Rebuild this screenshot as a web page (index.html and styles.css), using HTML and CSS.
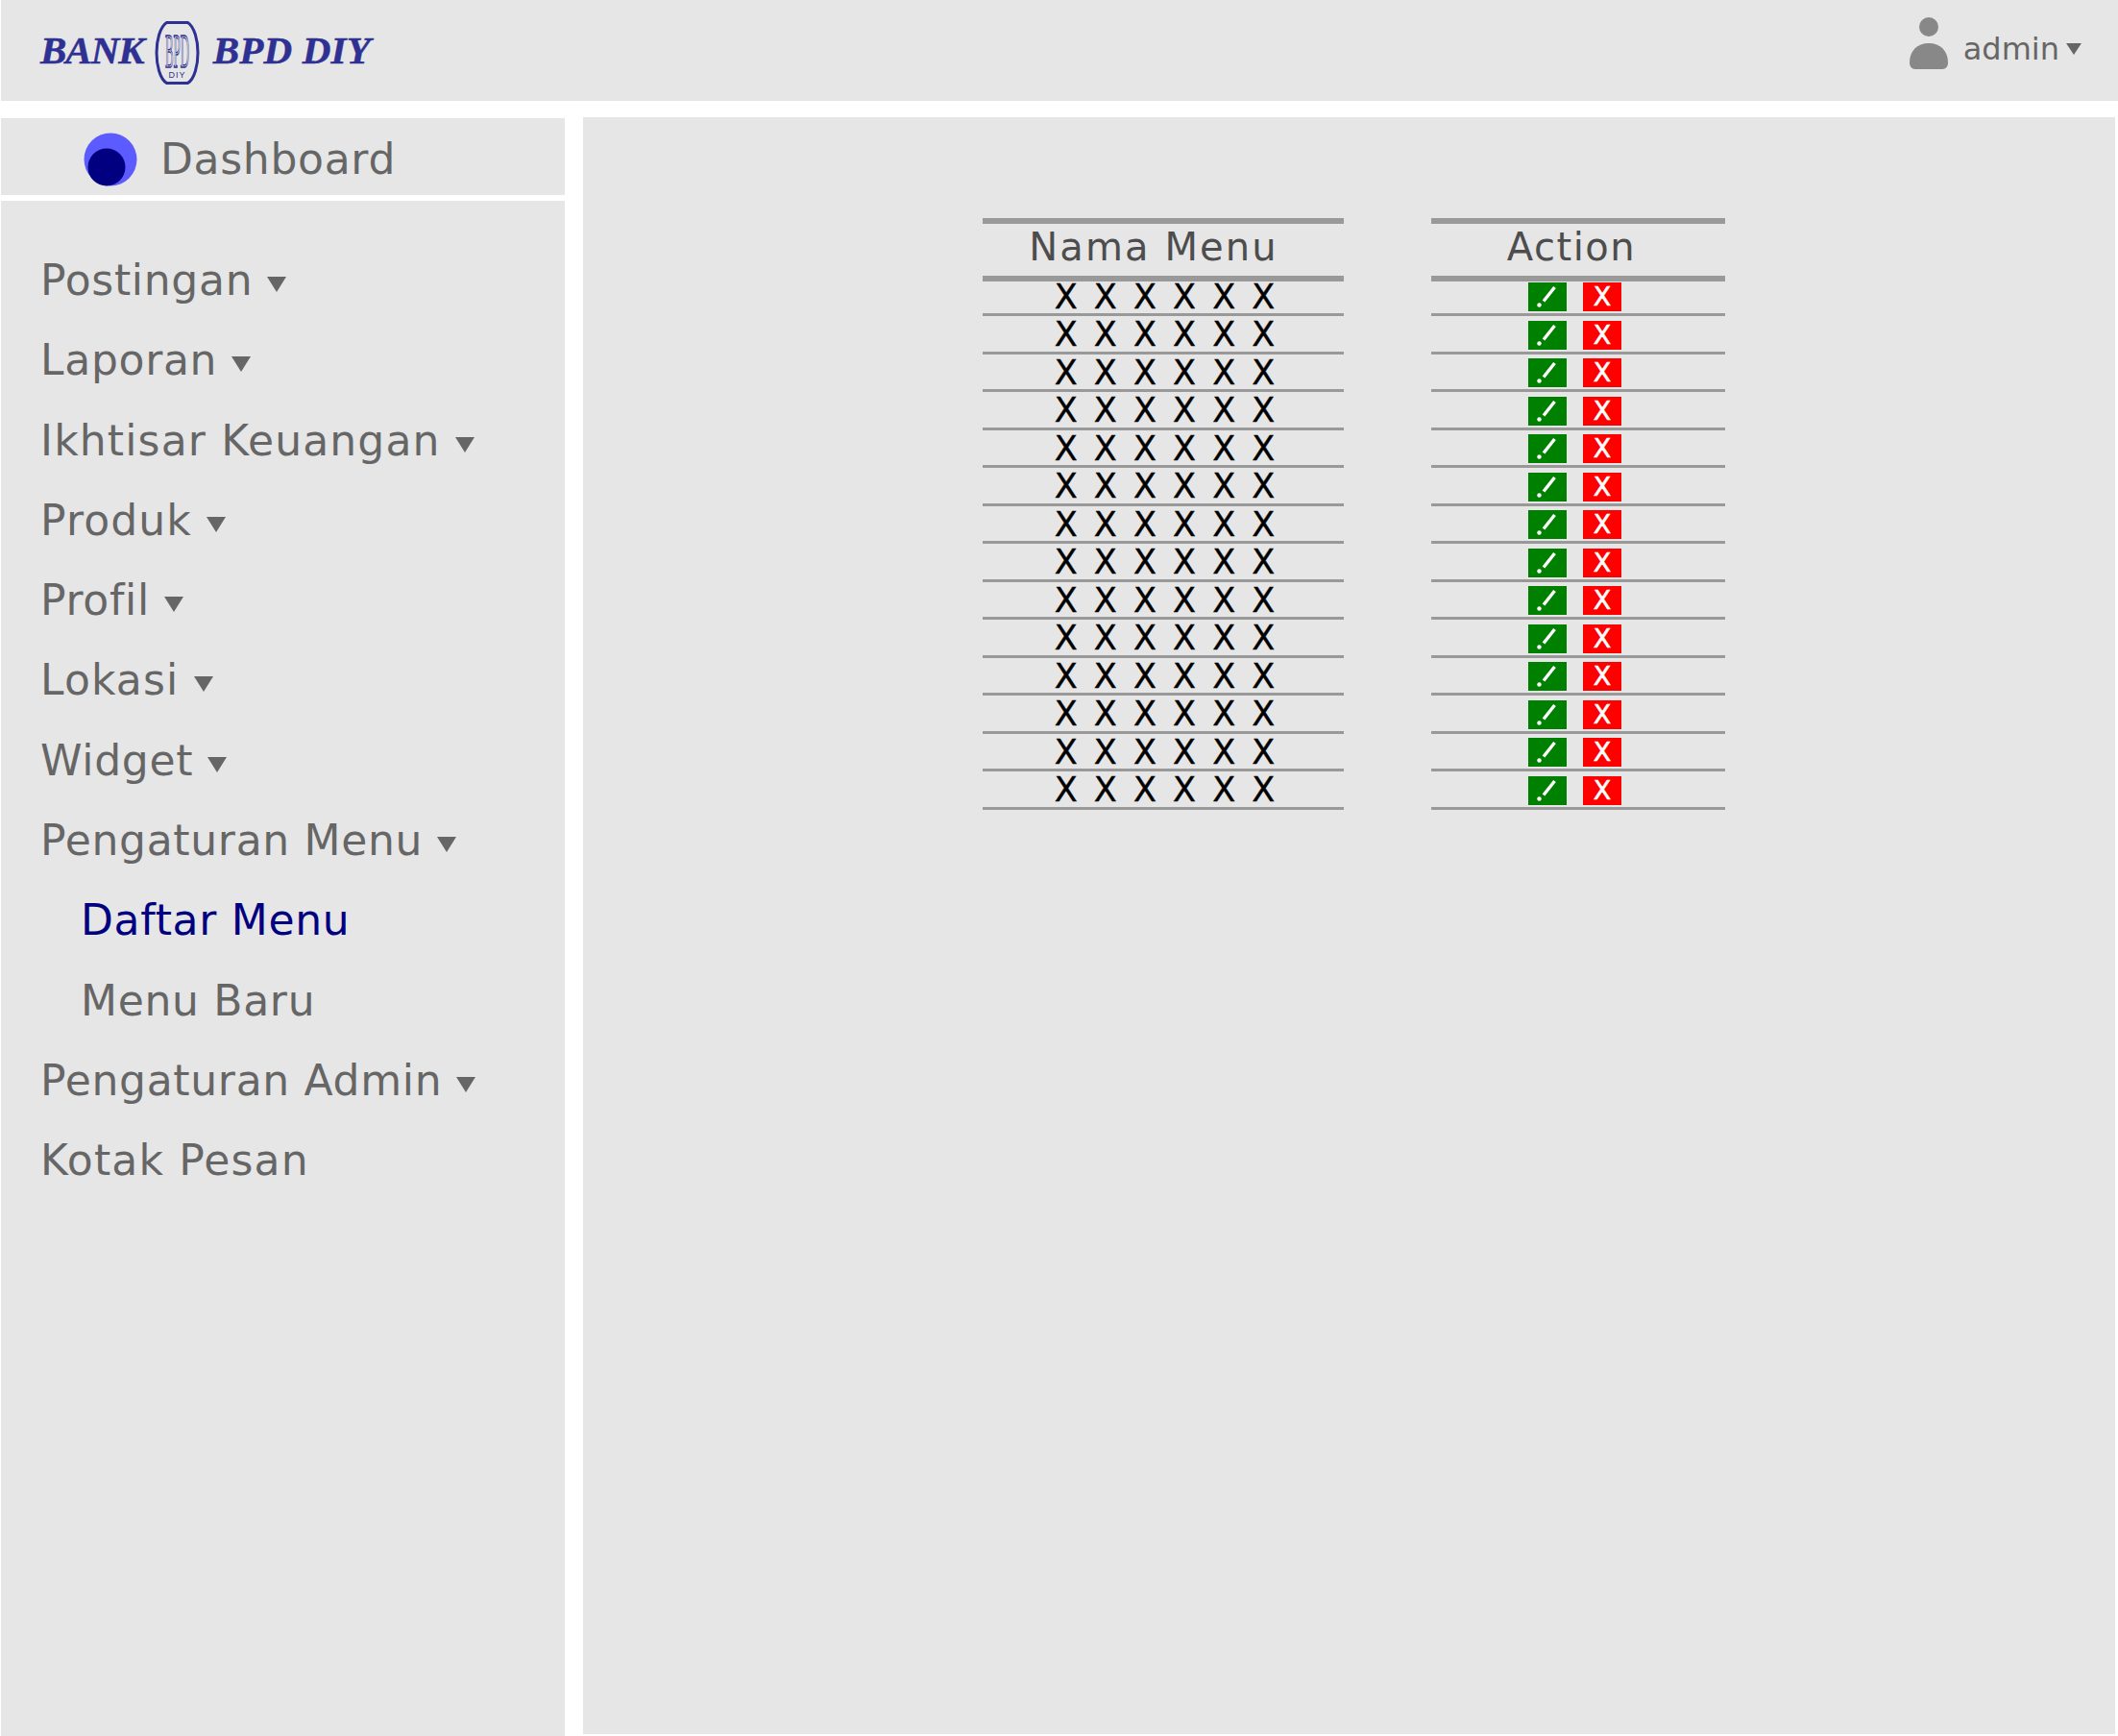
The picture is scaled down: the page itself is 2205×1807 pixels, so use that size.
FILE: index.html
```html
<!DOCTYPE html>
<html lang="id">
<head>
<meta charset="utf-8">
<title>Daftar Menu</title>
<link rel="stylesheet" href="styles.css">
</head>
<body>
<div class="app">
  <header class="topbar">
    <div class="brand">
      <span class="brand-text brand-bank">BANK</span>
      <svg class="emblem" viewBox="0 0 46 66" aria-hidden="true">
        <path class="emblem-ring" d="M12 1.5 H34 C41 6 44.5 20 44.5 33 C44.5 46 41 60 34 64.5 H12 C5 60 1.5 46 1.5 33 C1.5 20 5 6 12 1.5 Z"/>
        <text class="emblem-main" transform="translate(23 48) scale(.8 3.2)">BPD</text>
        <text class="emblem-sub" x="23" y="59">DIY</text>
      </svg>
      <span class="brand-text brand-bpd">BPD DIY</span>
    </div>
    <div class="user">
      <svg class="user-icon" viewBox="0 0 42 54" aria-hidden="true">
        <circle cx="21" cy="10" r="10"/>
        <path d="M1 47 C1 35 9 27 21 27 C33 27 41 35 41 47 C41 51 39 54 35 54 H7 C3 54 1 51 1 47 Z"/>
      </svg>
      <span class="user-name">admin</span>
      <span class="caret caret-small"></span>
    </div>
  </header>
  <div class="content">
    <aside class="sidebar">
      <div class="dash">
        <svg class="dash-icon" viewBox="0 0 56 56" aria-hidden="true">
          <circle class="dash-outer" cx="28" cy="28" r="27.5"/>
          <circle class="dash-inner" cx="24" cy="36" r="19.5"/>
        </svg>
        <span>Dashboard</span>
      </div>
      <nav class="menu">
        <a class="item">Postingan <span class="caret"></span></a>
        <a class="item">Laporan <span class="caret"></span></a>
        <a class="item wide">Ikhtisar Keuangan <span class="caret"></span></a>
        <a class="item wide">Produk <span class="caret"></span></a>
        <a class="item">Profil <span class="caret"></span></a>
        <a class="item wide">Lokasi <span class="caret"></span></a>
        <a class="item">Widget <span class="caret"></span></a>
        <a class="item">Pengaturan Menu <span class="caret"></span></a>
        <a class="item sub active">Daftar Menu</a>
        <a class="item sub">Menu Baru</a>
        <a class="item">Pengaturan Admin <span class="caret"></span></a>
        <a class="item wide">Kotak Pesan</a>
      </nav>
    </aside>
    <main class="main">
      <div class="table">
        <div class="th th-name">Nama Menu</div><div class="th th-action">Action</div>
        <div class="td name">X X X X X X</div><div class="td actions"><button class="btn ok"><svg viewBox="0 0 40 30"><path d="M27.5 5 L16 19.5"/><circle cx="11.5" cy="23.5" r="2.2"/></svg></button><button class="btn no">X</button></div>
        <div class="td name">X X X X X X</div><div class="td actions"><button class="btn ok"><svg viewBox="0 0 40 30"><path d="M27.5 5 L16 19.5"/><circle cx="11.5" cy="23.5" r="2.2"/></svg></button><button class="btn no">X</button></div>
        <div class="td name">X X X X X X</div><div class="td actions"><button class="btn ok"><svg viewBox="0 0 40 30"><path d="M27.5 5 L16 19.5"/><circle cx="11.5" cy="23.5" r="2.2"/></svg></button><button class="btn no">X</button></div>
        <div class="td name">X X X X X X</div><div class="td actions"><button class="btn ok"><svg viewBox="0 0 40 30"><path d="M27.5 5 L16 19.5"/><circle cx="11.5" cy="23.5" r="2.2"/></svg></button><button class="btn no">X</button></div>
        <div class="td name">X X X X X X</div><div class="td actions"><button class="btn ok"><svg viewBox="0 0 40 30"><path d="M27.5 5 L16 19.5"/><circle cx="11.5" cy="23.5" r="2.2"/></svg></button><button class="btn no">X</button></div>
        <div class="td name">X X X X X X</div><div class="td actions"><button class="btn ok"><svg viewBox="0 0 40 30"><path d="M27.5 5 L16 19.5"/><circle cx="11.5" cy="23.5" r="2.2"/></svg></button><button class="btn no">X</button></div>
        <div class="td name">X X X X X X</div><div class="td actions"><button class="btn ok"><svg viewBox="0 0 40 30"><path d="M27.5 5 L16 19.5"/><circle cx="11.5" cy="23.5" r="2.2"/></svg></button><button class="btn no">X</button></div>
        <div class="td name">X X X X X X</div><div class="td actions"><button class="btn ok"><svg viewBox="0 0 40 30"><path d="M27.5 5 L16 19.5"/><circle cx="11.5" cy="23.5" r="2.2"/></svg></button><button class="btn no">X</button></div>
        <div class="td name">X X X X X X</div><div class="td actions"><button class="btn ok"><svg viewBox="0 0 40 30"><path d="M27.5 5 L16 19.5"/><circle cx="11.5" cy="23.5" r="2.2"/></svg></button><button class="btn no">X</button></div>
        <div class="td name">X X X X X X</div><div class="td actions"><button class="btn ok"><svg viewBox="0 0 40 30"><path d="M27.5 5 L16 19.5"/><circle cx="11.5" cy="23.5" r="2.2"/></svg></button><button class="btn no">X</button></div>
        <div class="td name">X X X X X X</div><div class="td actions"><button class="btn ok"><svg viewBox="0 0 40 30"><path d="M27.5 5 L16 19.5"/><circle cx="11.5" cy="23.5" r="2.2"/></svg></button><button class="btn no">X</button></div>
        <div class="td name">X X X X X X</div><div class="td actions"><button class="btn ok"><svg viewBox="0 0 40 30"><path d="M27.5 5 L16 19.5"/><circle cx="11.5" cy="23.5" r="2.2"/></svg></button><button class="btn no">X</button></div>
        <div class="td name">X X X X X X</div><div class="td actions"><button class="btn ok"><svg viewBox="0 0 40 30"><path d="M27.5 5 L16 19.5"/><circle cx="11.5" cy="23.5" r="2.2"/></svg></button><button class="btn no">X</button></div>
        <div class="td name">X X X X X X</div><div class="td actions"><button class="btn ok"><svg viewBox="0 0 40 30"><path d="M27.5 5 L16 19.5"/><circle cx="11.5" cy="23.5" r="2.2"/></svg></button><button class="btn no">X</button></div>
      </div>
    </main>
  </div>
</div>
</body>
</html>
```
FILE: styles.css
```css
* { box-sizing: border-box; }
html, body { margin: 0; height: 100%; background: #fff; }
body { font-family: "DejaVu Sans", sans-serif; color: #666; overflow: hidden; }

.app { height: 1807px; display: flex; flex-direction: column; padding-left: 1px; }

.topbar {
  height: 105px;
  flex: none;
  background: #e6e6e6;
  display: flex;
  justify-content: space-between;
  align-items: flex-start;
  padding: 0 38px 0 41px;
}
.brand { display: flex; align-items: center; gap: 14px; height: 105px; }
.brand-text {
  font: italic bold 41px/50px "Liberation Serif", serif;
  color: #2e3192;
  margin-top: -1px;
  -webkit-text-stroke: .5px #2e3192;
}
.brand-bank { letter-spacing: -1px; margin-right: -3px; }
.brand-bpd { letter-spacing: .2px; }
.emblem { width: 47px; height: 66px; margin-top: 4px; }
.emblem-ring { fill: none; stroke: #2e3192; stroke-width: 3; }
.emblem-main {
  font: 16px "Liberation Serif", serif;
  fill: none;
  stroke: #2e3192;
  stroke-width: 1.1;
  vector-effect: non-scaling-stroke;
  text-anchor: middle;
}
.emblem-sub { font: 9px "Liberation Sans", sans-serif; fill: #2e3192; text-anchor: middle; letter-spacing: 1px; }

.user { display: flex; align-items: center; height: 54px; margin-top: 18px; }
.user-icon { width: 42px; height: 54px; fill: #888; margin-right: 15px; }
.user-name { font-size: 32px; line-height: 1; margin-top: 12px; }
.caret {
  display: inline-block;
  width: 0; height: 0;
  border-left: 10px solid transparent;
  border-right: 10px solid transparent;
  border-top: 16px solid #666;
  margin-left: 0;
  vertical-align: 3px;
}
.caret-small {
  border-left-width: 8px;
  border-right-width: 8px;
  border-top-width: 12px;
  margin-left: 7px;
  margin-top: 12px;
}

.content {
  flex: 1;
  display: grid;
  grid-template-columns: 587px 1fr;
  column-gap: 19px;
  padding: 17px 3px 2px 0;
  min-height: 0;
}
.sidebar { display: flex; flex-direction: column; gap: 6px; padding-top: 1px; margin-bottom: -2px; }
.dash {
  height: 80px;
  flex: none;
  background: #e6e6e6;
  display: flex;
  align-items: center;
  padding: 5px 0 0 86px;
  gap: 24px;
  font-size: 44px;
  letter-spacing: .7px;
}
.dash-icon { width: 56px; height: 56px; }
.dash-outer { fill: #5b5bff; }
.dash-inner { fill: #000080; }

.menu { flex: 1; background: #e6e6e6; padding-top: 41px; display: flex; flex-direction: column; }
.item {
  height: 83.3px;
  flex: none;
  display: block;
  line-height: 83.3px;
  font-size: 44px;
  letter-spacing: .7px;
  padding-left: 41px;
  white-space: nowrap;
}
.item.wide { letter-spacing: 1.15px; }
.item.sub { padding-left: 83px; }
.item.active { color: #000080; }

.main { background: #e6e6e6; padding: 105px 0 0 416px; }
.table {
  display: grid;
  grid-template-columns: 376px 306px;
  column-gap: 91px;
  width: max-content;
}
.th {
  height: 66px;
  margin-bottom: -3.5px;
  border-top: 6px solid #999;
  border-bottom: 6px solid #999;
  font-size: 40px;
  color: #4d4d4d;
  line-height: 49px;
  text-align: center;
}
.th-name { padding-right: 20px; letter-spacing: 2.1px; }
.th-action { padding-right: 14px; letter-spacing: 1.5px; }
.td {
  height: 39.5px;
  border-bottom: 3px solid #999;
}
.name {
  font-size: 35px;
  line-height: 38px;
  color: #000;
  text-align: center;
  letter-spacing: 3px;
  padding-left: 6px;
  -webkit-text-stroke: .4px #000;
}
.actions { display: flex; justify-content: flex-start; padding-left: 101px; gap: 17px; padding-top: 4.5px; }
.btn {
  width: 40px;
  height: 30px;
  padding: 0;
  border: 0;
  color: #fff;
  font: 27px/30px "DejaVu Sans", sans-serif;
  -webkit-text-stroke: .6px #fff;
  display: block;
}
.btn svg { display: block; width: 40px; height: 30px; }
.btn path { stroke: #fff; stroke-width: 3.4; fill: none; }
.btn circle { fill: #fff; }
.ok { background: #008000; }
.no { background: #f00; }
```
